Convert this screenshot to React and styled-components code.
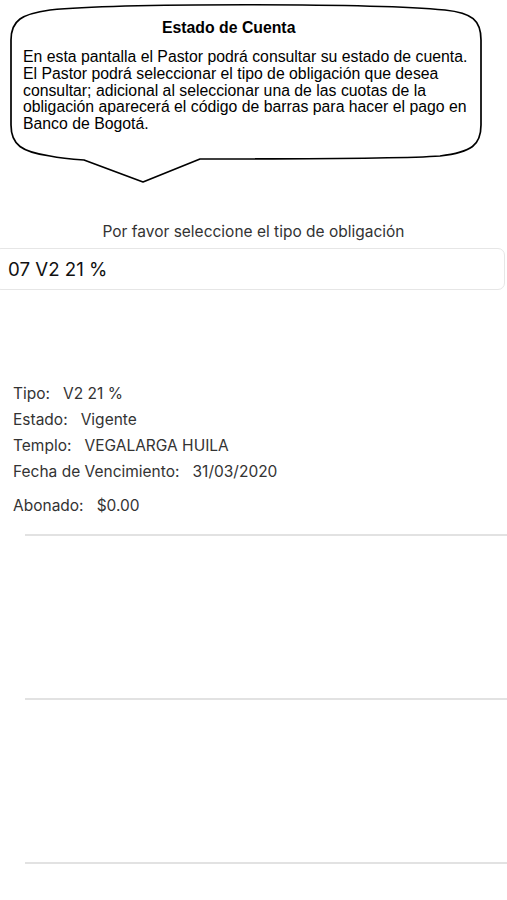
import React from "react";
import styled, { createGlobalStyle } from "styled-components";

const Global = createGlobalStyle`
  html, body { margin: 0; padding: 0; background: #fff; }
  body { width: 507px; overflow-x: hidden; }
`;

const Page = styled.div`
  width: 507px;
  min-height: 900px;
  background: #fff;
  font-family: "Inter", "Liberation Sans", sans-serif;
  color: #222;
  overflow: hidden;
`;

const Bubble = styled.div`
  position: relative;
  margin: 6px 0 0 10px;
  width: 473px;
  height: 176px;
  box-sizing: border-box;
  padding: 13px 0 0 13px;
  font-family: "Liberation Sans", Arial, sans-serif;
  color: #000;
`;

const BubbleShape = styled.svg`
  position: absolute;
  left: -10px;
  top: -6px;
  width: 507px;
  height: 190px;
  z-index: 0;
`;

const BubbleTitle = styled.div`
  position: relative;
  z-index: 1;
  font-weight: bold;
  font-size: 15.8px;
  line-height: 18px;
  padding-left: 139px;
`;

const BubbleText = styled.p`
  position: relative;
  z-index: 1;
  margin: 12px 0 0;
  font-size: 15.8px;
  line-height: 16.8px;
  width: 456px;
`;

const Prompt = styled.div`
  margin-top: 40px;
  text-align: center;
  font-size: 15.5px;
  line-height: 20px;
  color: #333;
`;

const Select = styled.div`
  margin: 6px 0 0 -6px;
  width: 511px;
  height: 42px;
  box-sizing: border-box;
  border: 1px solid #e6e6e6;
  border-radius: 7px;
  display: flex;
  align-items: center;
  padding-left: 13px;
  font-size: 18.7px;
  color: #111;
`;

const Details = styled.div`
  margin-top: 94px;
  padding-left: 13px;
  display: flex;
  flex-direction: column;
`;

const Row = styled.div`
  font-size: 15.5px;
  line-height: 20px;
  height: 20px;
  margin-bottom: ${(p) => p.$gap}px;
  color: #333;
  white-space: pre;
`;

const Separators = styled.div`
  margin-top: 18px;
  padding-left: 25px;
  display: flex;
  flex-direction: column;
  gap: 162px;
`;

const Line = styled.div`
  height: 2px;
  background: #e2e2e2;
`;

export default function App() {
  return (
    <Page>
      <Global />
      <Bubble>
        <BubbleShape viewBox="0 0 507 190">
          <path
            d="M 11 40 C 11 20 22 14 50 10 C 120 3 370 3 445 10 C 472 13 481 20 481 40 L 481 125 C 481 145 472 152 440 156 C 400 159 300 159 200 159 L 143 182 L 84 160 C 70 159 60 158 50 156 C 22 152 11 145 11 125 Z"
            fill="#fff"
            stroke="#000"
            strokeWidth="1.7"
            strokeLinejoin="round"
          />
        </BubbleShape>
        <BubbleTitle>Estado de Cuenta</BubbleTitle>
        <BubbleText>
          En esta pantalla el Pastor podrá consultar su estado de cuenta. El
          Pastor podrá seleccionar el tipo de obligación que desea consultar;
          adicional al seleccionar una de las cuotas de la obligación aparecerá
          el código de barras para hacer el pago en Banco de Bogotá.
        </BubbleText>
      </Bubble>
      <Prompt>Por favor seleccione el tipo de obligación</Prompt>
      <Select>07 V2 21 %</Select>
      <Details>
        <Row $gap={6}>{"Tipo:   V2 21 %"}</Row>
        <Row $gap={6}>{"Estado:   Vigente"}</Row>
        <Row $gap={6}>{"Templo:   VEGALARGA HUILA"}</Row>
        <Row $gap={14}>{"Fecha de Vencimiento:   31/03/2020"}</Row>
        <Row $gap={0}>{"Abonado:   $0.00"}</Row>
      </Details>
      <Separators>
        <Line />
        <Line />
        <Line />
      </Separators>
    </Page>
  );
}
